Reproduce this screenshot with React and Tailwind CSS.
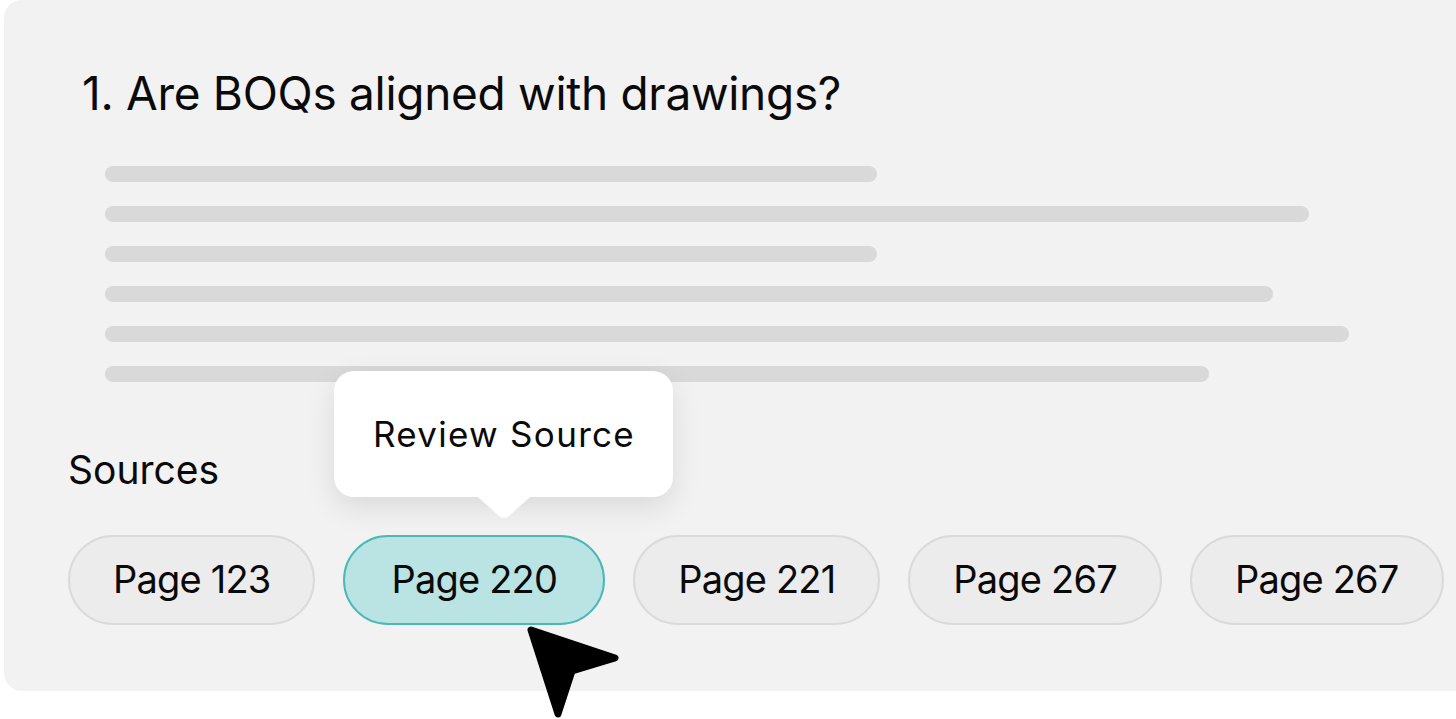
import React from 'react';

const lines = [772, 1204, 772, 1168, 1244, 1104];
const pages = ['Page 123', 'Page 220', 'Page 221', 'Page 267', 'Page 267'];

function Cursor() {
  return (
    <svg
      className="absolute left-[181px] top-[88px] overflow-visible"
      width="100"
      height="100"
      viewBox="0 0 100 100"
    >
      <path
        d="M7 7 L91 35 L48 48 L34 91 Z"
        fill="#000"
        stroke="#000"
        strokeWidth="7"
        strokeLinejoin="round"
      />
    </svg>
  );
}

function Tooltip() {
  return (
    <div className="absolute left-[-9px] bottom-[calc(100%+38px)] z-10 flex h-[126px] w-[339px] items-center justify-center rounded-[20px] bg-white shadow-[0_10px_30px_rgba(0,0,0,0.10)]">
      <span className="whitespace-nowrap text-[35px] tracking-[1.3px] text-[#0a0a0a]">Review Source</span>
      <div className="absolute left-1/2 top-full -translate-x-1/2">
        <svg width="52" height="24" viewBox="0 0 52 24">
          <path d="M0 0 L21 19 Q26 23 31 19 L52 0 Z" fill="#fff" />
        </svg>
      </div>
    </div>
  );
}

export default function App() {
  return (
    <div className="h-[719px] w-[1456px] overflow-hidden bg-white font-['Inter',sans-serif] text-[#0a0a0a]">
      <div className="ml-[4px] h-[691px] w-[1500px] rounded-l-[18px] bg-[#f2f2f2] pt-[66px]">
        <h1 className="ml-[78px] whitespace-nowrap text-[46px] leading-[1.2] tracking-[-0.3px] font-normal">
          1. Are BOQs aligned with drawings?
        </h1>

        {/* placeholder answer lines */}
        <div className="ml-[101px] mt-[45px] flex flex-col gap-[24px]">
          {lines.map((w, i) => (
            <div key={i} className="h-[16px] rounded-full bg-[#d9d9d9]" style={{ width: w }} />
          ))}
        </div>

        <p className="ml-[64px] mt-[65px] text-[39px] leading-[1.2]">Sources</p>

        <div className="ml-[64px] mt-[41px] flex gap-[28px]">
          {pages.map((p, i) =>
            i === 1 ? (
              <div key={i} className="relative shrink-0">
                <Tooltip />
                <button className="flex h-[90px] items-center whitespace-nowrap rounded-full border-2 border-[#4bb8b6] bg-[#b9e4e3] px-[46px] text-[38px] tracking-[-0.8px]">
                  {p}
                </button>
                <Cursor />
              </div>
            ) : (
              <button
                key={i}
                className="flex h-[90px] shrink-0 items-center whitespace-nowrap rounded-full border-2 border-[#dadada] bg-[#ececec] px-[43px] text-[38px] tracking-[-0.8px]"
              >
                {p}
              </button>
            )
          )}
        </div>
      </div>
    </div>
  );
}
